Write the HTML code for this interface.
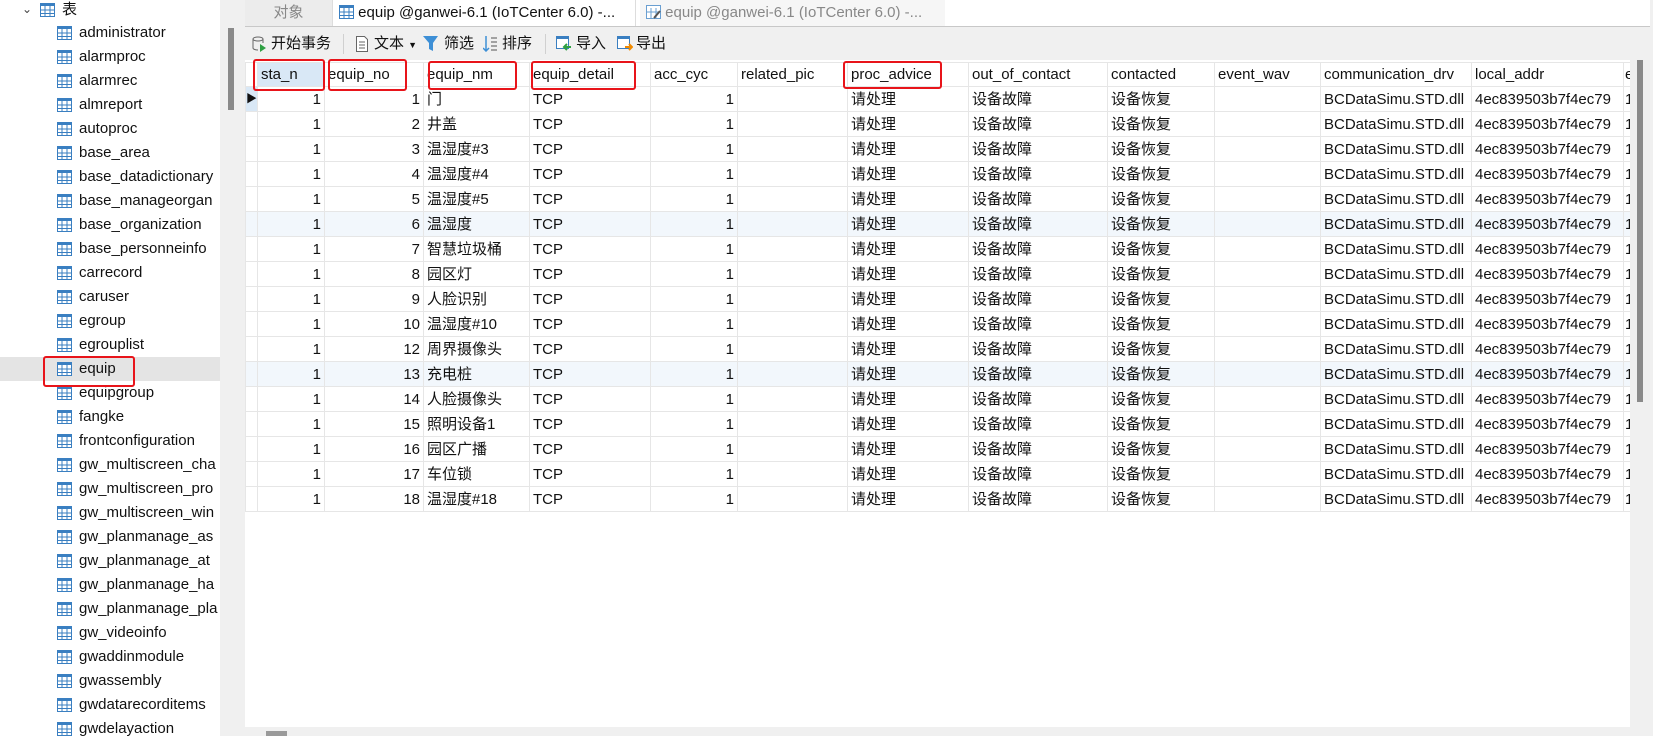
<!DOCTYPE html>
<html><head><meta charset="utf-8">
<style>
*{margin:0;padding:0;box-sizing:border-box}
body{width:1653px;height:736px;overflow:hidden;background:#f0f0f0;font-family:"Liberation Sans","Noto Sans CJK SC",sans-serif;font-size:15px;color:#111;position:relative}
#side{position:absolute;left:0;top:0;width:220px;height:736px;background:#fff;overflow:hidden}
.it{position:absolute;left:0;width:220px;height:24px;line-height:24px;white-space:nowrap}
.it .ic{position:absolute;left:57px;top:5px}
.it span{position:absolute;left:79px}
#sb{position:absolute;left:228px;top:28px;width:6px;height:82px;background:#8a8a8a}
#tabs{position:absolute;left:245px;top:0;width:1405px;height:27px;background:#fff;border-bottom:1px solid #c8c8c8}
.tab{position:absolute;top:0;height:26px;line-height:25px;font-size:15px;white-space:nowrap;overflow:hidden}
#tb{position:absolute;left:245px;top:28px;height:32px;width:1400px}
.tbi{position:absolute;top:7px;line-height:18px;font-size:15px;white-space:nowrap}
#grid{position:absolute;left:245px;top:60px;width:1385px;height:667px;background:#fff;overflow:hidden}
table{border-collapse:collapse;table-layout:fixed;position:absolute;left:0;top:2px;width:1390px}
td{height:25px;border:1px solid #e6e6e6;padding:0 3px;white-space:nowrap;overflow:hidden;font-size:15px;line-height:23px}
td.r{text-align:right}
tr.h td{height:24px}
tr.b td{background:#f2f7fc}
.red{position:absolute;border:2px solid #e8141a;border-radius:3px}
#vs{position:absolute;left:1637px;top:60px;width:6px;height:342px;background:#8a8a8a}
#hs{position:absolute;left:266px;top:731px;width:21px;height:5px;background:#9a9a9a}
</style></head><body>
<div id="side">
<div style="position:absolute;left:22px;top:2px;font-size:12px;color:#444">&#8964;</div>
<div class="it" style="top:-2px"><svg class="ic" style="left:40px" width="15" height="14"><rect x=".5" y=".5" width="14" height="13" fill="#fff" stroke="#3a7fc1"/><rect x="0" y="0" width="15" height="3" fill="#3a7fc1"/><path d="M5 3v11M10 3v11M0 7h15M0 10.5h15" stroke="#3a7fc1"/></svg><span style="left:62px">表</span></div>
</div>
<div id="sb"></div>
<div id="tabs">
<div class="tab" style="left:0;width:87px;background:#ececec;color:#888;text-align:center">对象</div>
<div class="tab" style="left:87px;width:304px;background:#fff;border-left:1px solid #ddd;border-right:1px solid #ddd;padding-left:6px"><svg width="15" height="14" style="vertical-align:-2px"><rect x=".5" y=".5" width="14" height="13" fill="#fff" stroke="#3a7fc1"/><rect width="15" height="3" fill="#3a7fc1"/><path d="M5 3v11M10 3v11M0 7h15M0 10.5h15" stroke="#3a7fc1"/></svg> equip @ganwei-6.1 (IoTCenter 6.0) -...</div>
<div class="tab" style="left:395px;width:305px;background:#f6f6f6;color:#888;padding-left:6px"><svg width="15" height="14" style="vertical-align:-2px"><rect x=".5" y=".5" width="14" height="13" fill="#fff" stroke="#6a9fd1"/><path d="M5 3v11M10 3v11M0 7h15" stroke="#6a9fd1"/><path d="M8 13l6-7" stroke="#555" stroke-width="2"/></svg> equip @ganwei-6.1 (IoTCenter 6.0) -...</div>
</div>
<div id="tb">
<svg style="position:absolute;left:7px;top:8px" width="15" height="16"><ellipse cx="6" cy="3" rx="5" ry="2" fill="none" stroke="#666"/><path d="M1 3v9c0 1 2 2 5 2M11 3v4" fill="none" stroke="#666"/><path d="M8 8l6 4-6 4z" fill="#2ea043"/></svg>
<div class="tbi" style="left:26px">开始事务</div>
<div style="position:absolute;left:98px;top:6px;width:1px;height:20px;background:#d0d0d0"></div>
<svg style="position:absolute;left:111px;top:8px" width="12" height="16"><path d="M.5.5h8l3 3v12h-11z" fill="#fff" stroke="#666"/><path d="M3 6h6M3 9h6M3 12h6" stroke="#666"/></svg>
<div class="tbi" style="left:129px">文本 <span style="font-size:9px">▼</span></div>
<svg style="position:absolute;left:178px;top:8px" width="15" height="16"><path d="M0 0h15l-5 7v8l-4-2v-6z" fill="#3d8fd6"/></svg>
<div class="tbi" style="left:199px">筛选</div>
<svg style="position:absolute;left:238px;top:8px" width="15" height="16"><path d="M3 0v15M0 12l3 3 3-3" fill="none" stroke="#3d8fd6" stroke-width="1.5"/><path d="M8 2h6M8 6h6M8 10h6M8 14h6" stroke="#555"/></svg>
<div class="tbi" style="left:257px">排序</div>
<div style="position:absolute;left:300px;top:6px;width:1px;height:20px;background:#d0d0d0"></div>
<svg style="position:absolute;left:311px;top:8px" width="16" height="16"><rect x=".5" y=".5" width="12" height="12" fill="#fff" stroke="#3a7fc1"/><rect width="13" height="3" fill="#3a7fc1"/><path d="M15 11h-6M11 8l-3 3 3 3" fill="none" stroke="#2ea043" stroke-width="2"/></svg>
<div class="tbi" style="left:331px">导入</div>
<svg style="position:absolute;left:372px;top:8px" width="16" height="16"><rect x=".5" y=".5" width="12" height="12" fill="#fff" stroke="#3a7fc1"/><rect width="13" height="3" fill="#3a7fc1"/><path d="M8 11h6M12 8l3 3-3 3" fill="none" stroke="#f08a00" stroke-width="2"/></svg>
<div class="tbi" style="left:391px">导出</div>
</div>
<div id="grid">
<table>
<colgroup><col style="width:12px"><col style="width:67px"><col style="width:99px"><col style="width:106px"><col style="width:121px"><col style="width:87px"><col style="width:110px"><col style="width:121px"><col style="width:139px"><col style="width:107px"><col style="width:106px"><col style="width:151px"><col style="width:152px"><col style="width:12px"></colgroup>
<tbody id="tbd">
<tr class="h"><td></td><td style="background:#d9e8f6">sta_n</td><td>equip_no</td><td>equip_nm</td><td>equip_detail</td><td>acc_cyc</td><td>related_pic</td><td>proc_advice</td><td>out_of_contact</td><td>contacted</td><td>event_wav</td><td>communication_drv</td><td>local_addr</td><td style="padding-left:1px">e</td></tr>
</tbody></table>
</div>
<div id="vs"></div>
<div id="hs"></div>
<div class="red" style="left:253px;top:59px;width:72px;height:32px"></div>
<div class="red" style="left:328px;top:59px;width:79px;height:32px"></div>
<div class="red" style="left:428px;top:61px;width:89px;height:29px"></div>
<div class="red" style="left:531px;top:61px;width:105px;height:29px"></div>
<div class="red" style="left:843px;top:61px;width:99px;height:28px"></div>
<div class="red" style="left:43px;top:356px;width:92px;height:31px"></div>
<script>
var names=["administrator","alarmproc","alarmrec","almreport","autoproc","base_area","base_datadictionary","base_manageorgan","base_organization","base_personneinfo","carrecord","caruser","egroup","egrouplist","equip","equipgroup","fangke","frontconfiguration","gw_multiscreen_cha","gw_multiscreen_pro","gw_multiscreen_win","gw_planmanage_as","gw_planmanage_at","gw_planmanage_ha","gw_planmanage_pla","gw_videoinfo","gwaddinmodule","gwassembly","gwdatarecorditems","gwdelayaction"];
var ic='<svg class="ic" width="15" height="14"><rect x=".5" y=".5" width="14" height="13" fill="#fff" stroke="#3a7fc1"/><rect width="15" height="3" fill="#3a7fc1"/><path d="M5 3v11M10 3v11M0 7h15M0 10.5h15" stroke="#3a7fc1"/></svg>';
var s=document.getElementById('side'),h='';
names.forEach(function(n,i){var y=21+i*24;h+='<div class="it" style="top:'+y+'px;'+(n=='equip'?'background:#e4e4e4':'')+'">'+ic+'<span>'+n+'</span></div>';});
s.insertAdjacentHTML('beforeend',h);
var rows=[[1,"门"],[2,"井盖"],[3,"温湿度#3"],[4,"温湿度#4"],[5,"温湿度#5"],[6,"温湿度"],[7,"智慧垃圾桶"],[8,"园区灯"],[9,"人脸识别"],[10,"温湿度#10"],[12,"周界摄像头"],[13,"充电桩"],[14,"人脸摄像头"],[15,"照明设备1"],[16,"园区广播"],[17,"车位锁"],[18,"温湿度#18"]];
var t='';
rows.forEach(function(r,i){var cls=(i==5||i==11)?' class="b"':'';
t+='<tr'+cls+'><td style="padding:0;'+(i==0?'background:#d9e8f6;font-size:11px;line-height:23px':'')+'">'+(i==0?'▶':'')+'</td><td class="r">1</td><td class="r">'+r[0]+'</td><td>'+r[1]+'</td><td>TCP</td><td class="r">1</td><td></td><td>请处理</td><td>设备故障</td><td>设备恢复</td><td></td><td>BCDataSimu.STD.dll</td><td>4ec839503b7f4ec79</td><td style="padding-left:1px">1</td></tr>';});
document.getElementById('tbd').insertAdjacentHTML('beforeend',t);
</script>
</body></html>
